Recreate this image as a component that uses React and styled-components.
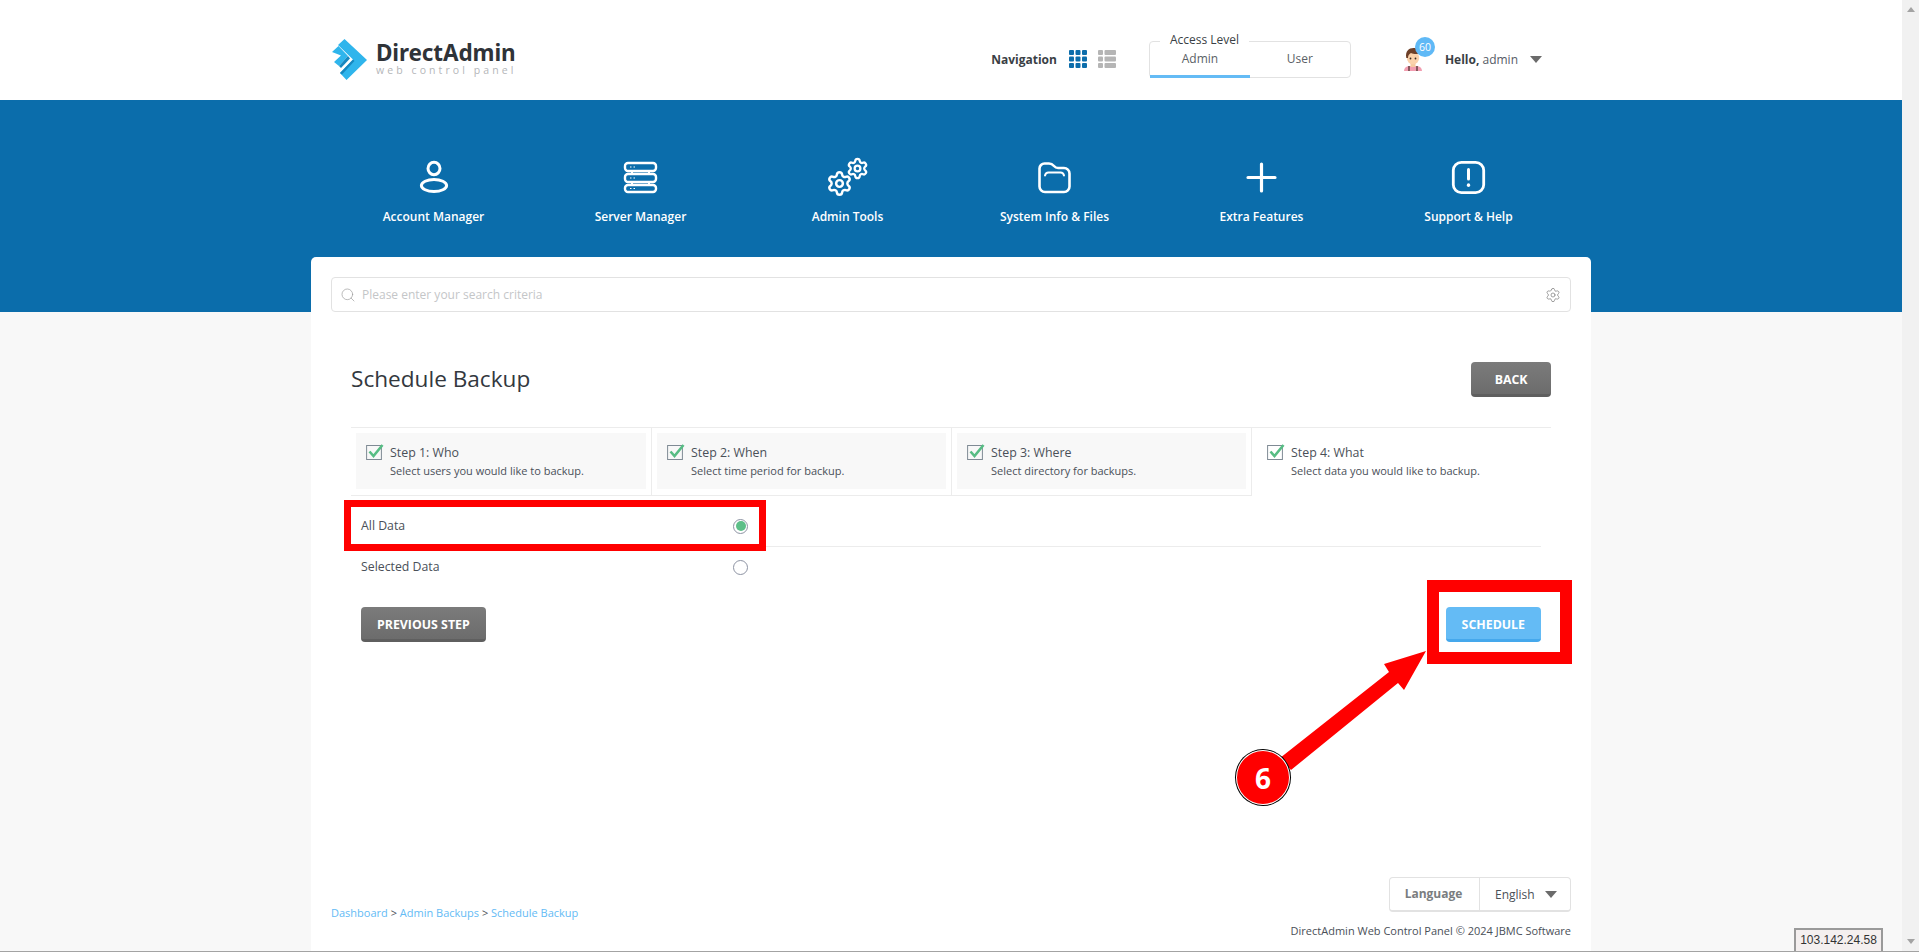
import React from "react";
import styled, { createGlobalStyle } from "styled-components";
import { Search, Settings } from "lucide-react";

const Global = createGlobalStyle`
  html, body { margin: 0; padding: 0; height: 100%; overflow: hidden; }
  body { background: #f8f8f8; font-family: "Open Sans", "Noto Sans", sans-serif; color: #3a3f45; }
  * { box-sizing: border-box; }
`;

const Viewport = styled.div`
  position: relative;
  display: flex;
  width: 1919px;
  height: 952px;
  border-bottom: 1px solid #a3a3a3;
  overflow: hidden;
`;
const Page = styled.div`
  flex: 1;
  min-width: 0;
  display: flex;
  flex-direction: column;
`;
const ScrollTrack = styled.div`
  width: 17px;
  background: #f1f1f1;
  display: flex;
  flex-direction: column;
  justify-content: space-between;
  align-items: center;
  padding: 7px 0 7px;
`;
const ScrollArrow = styled.div`
  width: 0;
  height: 0;
  border-left: 4px solid transparent;
  border-right: 4px solid transparent;
  ${(p) => (p.$down ? "border-top: 5px solid #a3a3a3;" : "border-bottom: 5px solid #a3a3a3;")}
`;

const Header = styled.header`
  height: 100px;
  background: #fff;
  flex: none;
`;
const HeaderInner = styled.div`
  width: 1242px;
  height: 100%;
  margin: 0 auto;
  padding: 18px 30px 0 2px;
  display: flex;
  align-items: center;
`;
const Logo = styled.div`
  display: flex;
  align-items: center;
  gap: 8px;
`;
const LogoWords = styled.div`
  display: flex;
  flex-direction: column;
`;
const LogoName = styled.div`
  font: 700 22.5px/25px "Noto Sans", sans-serif;
  color: #2f3338;
  letter-spacing: -0.1px;
  margin-top: -2px;
`;
const LogoSub = styled.div`
  font: 400 10.5px/12px "Open Sans", sans-serif;
  color: #b4b6b9;
  letter-spacing: 3.09px;
  white-space: nowrap;
  margin-top: -1px;
`;
const NavSwitch = styled.div`
  margin-left: auto;
  display: flex;
  align-items: center;
  gap: 12px;
`;
const NavLabel = styled.span`
  font-size: 12px;
  font-weight: 700;
  color: #3a3f45;
`;
const NavIcons = styled.div`
  display: flex;
  gap: 11px;
`;
const Access = styled.div`
  position: relative;
  margin-left: 33px;
  width: 202px;
  height: 37px;
  border: 1px solid #e2e2e2;
  border-radius: 4px;
  display: flex;
`;
const AccessLegend = styled.span`
  position: absolute;
  top: -10px;
  left: 10px;
  padding: 0 10px;
  background: #fff;
  font-size: 12px;
  line-height: 16px;
  color: #3a3f45;
`;
const AccessTab = styled.div`
  flex: 1;
  display: flex;
  align-items: center;
  justify-content: center;
  font-size: 12px;
  color: #5a5f66;
  margin-bottom: -1px;
  padding-top: 1px;
  border-bottom: 3px solid ${(p) => (p.$active ? "#64bbf5" : "transparent")};
`;
const UserMenu = styled.div`
  margin-left: 52px;
  display: flex;
  align-items: center;
`;
const AvatarWrap = styled.div`
  position: relative;
  width: 20px;
  height: 24px;
  margin-right: 22px;
`;
const Badge = styled.span`
  position: absolute;
  top: -10px;
  left: 12px;
  width: 20px;
  height: 20px;
  border-radius: 50%;
  background: #5fb9f6;
  color: #fff;
  font-size: 10.5px;
  line-height: 20px;
  text-align: center;
`;
const Hello = styled.span`
  font-size: 12px;
  color: #555b66;
  b { font-weight: 700; color: #3a3f45; }
`;
const Caret = styled.span`
  display: inline-block;
  width: 0;
  height: 0;
  border-left: 6px solid transparent;
  border-right: 6px solid transparent;
  border-top: 7px solid #6b6b6b;
  margin-left: ${(p) => p.$gap || 11}px;
`;

const Hero = styled.section`
  flex: none;
  height: 212px;
  background: #0b6dab;
`;
const HeroNav = styled.nav`
  width: 1242px;
  margin: 0 auto;
  padding-top: 57px;
  display: grid;
  grid-template-columns: repeat(6, 1fr);
`;
const HeroItem = styled.div`
  display: flex;
  flex-direction: column;
  align-items: center;
`;
const HeroIcon = styled.div`
  height: 40px;
  display: flex;
  align-items: center;
  justify-content: center;
  margin-bottom: 10px;
`;
const HeroLabel = styled.span`
  font-size: 12px;
  line-height: 20px;
  font-weight: 600;
  color: #fff;
`;

const Card = styled.main`
  position: relative;
  width: 1280px;
  margin: -55px auto 0;
  flex: 1;
  background: #fff;
  border-radius: 5px 5px 0 0;
  padding: 20px 20px 12px;
  display: flex;
  flex-direction: column;
`;
const SearchBar = styled.div`
  height: 35px;
  border: 1px solid #e2e2e2;
  border-radius: 4px;
  display: flex;
  align-items: center;
  padding: 0 9px 0 8px;
  gap: 6px;
  font-size: 12px;
  color: #c4c6c8;
`;
const SearchText = styled.span`
  flex: 1;
`;
const Content = styled.div`
  padding: 0 20px;
  margin-top: 50px;
`;
const TitleRow = styled.div`
  display: flex;
  justify-content: space-between;
  align-items: center;
  height: 35px;
`;
const Title = styled.h1`
  margin: -2px 0 0;
  font-size: 22.6px;
  font-weight: 500;
  color: #33383e;
`;
const Button = styled.button`
  height: 35px;
  padding: 2px ${(p) => p.$pad || 16}px 0;
  border: 0;
  border-bottom: 3px solid ${(p) => (p.$primary ? "#45a8ec" : "#5f5f5f")};
  border-radius: 4px;
  background: ${(p) => (p.$primary ? "#64bbf5" : "linear-gradient(#7b7b7b, #6c6c6c)")};
  color: #fff;
  font: 700 12.35px "Open Sans", sans-serif;
  text-transform: uppercase;
`;
const Steps = styled.div`
  margin-top: 30px;
  border-top: 1px solid #ececec;
  display: grid;
  grid-template-columns: 301px 300px 300px 299px;
`;
const StepCell = styled.div`
  height: 68px;
  padding: 5px 5px 6px;
  border-right: ${(p) => (p.$last ? "0" : "1px solid #ececec")};
  border-bottom: ${(p) => (p.$last ? "0" : "1px solid #ececec")};
`;
const StepInner = styled.div`
  height: 56px;
  padding: 11px 10px 0;
  background: ${(p) => (p.$active ? "transparent" : "#f8f8f8")};
`;
const StepHead = styled.div`
  display: flex;
  align-items: center;
  gap: 6px;
  height: 16px;
`;
const StepTitle = styled.span`
  font-size: 12.4px;
  font-weight: 500;
  color: #4a5058;
`;
const StepDesc = styled.div`
  margin: 3px 0 0 24px;
  font-size: 11px;
  line-height: 16px;
  color: #4a5058;
  white-space: nowrap;
`;
const Options = styled.div`
  width: 1190px;
  margin-top: 10px;
`;
const OptionRow = styled.div`
  height: ${(p) => (p.$last ? 40 : 41)}px;
  padding: 0 10px;
  display: grid;
  grid-template-columns: 372px 15px;
  align-items: center;
  font-size: 12.3px;
  font-weight: 500;
  color: #4a5058;
  border-bottom: ${(p) => (p.$last ? "0" : "1px solid #ececec")};
`;
const OptionLabel = styled.span`
  margin-top: -2px;
`;
const Radio = styled.span`
  width: 15px;
  height: 15px;
  border-radius: 50%;
  border: 1px solid #8d93a3;
  background: #fff;
  display: flex;
  align-items: center;
  justify-content: center;
  &::after {
    content: "";
    width: 10px;
    height: 10px;
    border-radius: 50%;
    background: ${(p) => (p.$on ? "#5dbf88" : "transparent")};
  }
`;
const Actions = styled.div`
  width: 1190px;
  margin-top: 20px;
  padding-left: 10px;
  display: flex;
  justify-content: space-between;
`;
const Footer = styled.footer`
  margin-top: auto;
  display: flex;
  justify-content: space-between;
  align-items: flex-end;
`;
const Crumbs = styled.div`
  font-size: 11px;
  line-height: 16px;
  color: #64bbf5;
  margin-bottom: 18px;
  span { color: #4a5058; }
`;
const FooterRight = styled.div`
  display: flex;
  flex-direction: column;
  align-items: flex-end;
  gap: 11px;
`;
const LangBox = styled.div`
  width: 182px;
  height: 35px;
  border: 1px solid #e2e2e2;
  border-bottom-width: 2px;
  border-radius: 4px;
  display: flex;
  font-size: 12px;
`;
const LangLabel = styled.div`
  width: 90px;
  padding: 0 2px 2px 0;
  border-right: 1px solid #e2e2e2;
  display: flex;
  align-items: center;
  justify-content: center;
  font-weight: 700;
  color: #7a7d80;
`;
const LangValue = styled.div`
  flex: 1;
  display: flex;
  align-items: center;
  padding-left: 15px;
  color: #4a5058;
`;
const Copy = styled.div`
  font-size: 11px;
  line-height: 16px;
  color: #4a5058;
  white-space: nowrap;
`;

const IpTip = styled.div`
  position: absolute;
  left: 1794px;
  bottom: 0;
  width: 89px;
  height: 23px;
  border: 2px solid #9a9a9a;
  border-bottom: 0;
  background: #f4efef;
  font: 400 12px/21px "Liberation Sans", Arial, sans-serif;
  color: #333;
  text-align: center;
`;
const RedFrame = styled.div`
  position: absolute;
  left: ${(p) => p.$x}px;
  top: ${(p) => p.$y}px;
  width: ${(p) => p.$w}px;
  height: ${(p) => p.$h}px;
  border: ${(p) => p.$b}px solid #ff0000;
  pointer-events: none;
`;
const ArrowArt = styled.svg`
  position: absolute;
  left: 1270px;
  top: 640px;
`;
const StepMarker = styled.div`
  position: absolute;
  left: 1236px;
  top: 750px;
  width: 54px;
  height: 55px;
  border-radius: 50%;
  background: #ff0000;
  border: 1px solid #fff;
  box-shadow: 0 0 0 1px #000;
  display: flex;
  align-items: center;
  justify-content: center;
  color: #fff;
  font: 700 28px "Open Sans", sans-serif;
`;

const PersonIcon = () => (
  <svg width="30" height="34" viewBox="0 0 30 34" fill="none" stroke="#fff" strokeWidth="3">
    <ellipse cx="15" cy="8.5" rx="6" ry="6.2" />
    <ellipse cx="15" cy="25.5" rx="12.6" ry="6" />
  </svg>
);
const ServerIcon = () => (
  <svg width="35" height="33" viewBox="0 0 35 33" fill="none" stroke="#fff" strokeWidth="2.4">
    <rect x="2" y="2" width="31" height="8" rx="3" />
    <rect x="2" y="13" width="31" height="8" rx="3" />
    <rect x="2" y="24" width="31" height="7" rx="3" />
    <path d="M9 10v3M26 10v3M9 21v3M26 21v3" strokeWidth="2" />
    <path d="M7 6h1.500M10.500 6H12M7 17h1.500M10.500 17H12M7 27.500h1.500M10.500 27.500H12" strokeWidth="1" />
  </svg>
);
const GearsIcon = () => (
  <svg width="42" height="40" viewBox="1 0 42 40" fill="none">
    <Settings x="0" y="13" width="27" height="27" color="#fff" strokeWidth="2.2" />
    <Settings x="20" y="0" width="23" height="23" color="#fff" strokeWidth="2.4" />
  </svg>
);
const FolderIcon = () => (
  <svg width="35" height="33" viewBox="0 0 35 33" fill="none" stroke="#fff" strokeWidth="2.6" strokeLinecap="round" strokeLinejoin="round">
    <path d="M2.500 7.500a5 5 0 0 1 5-5h4.500c2.500 0 3.700 1 5 2.500 1 1.200 2 2 4 2H27a5.500 5.500 0 0 1 5.500 5.500v13a5.500 5.500 0 0 1-5.500 5.500H8a5.500 5.500 0 0 1-5.500-5.500z" />
    <path d="M8 14.500c.4-2 1.500-3 3.500-3h12c2 0 3.100 1 3.500 3" strokeWidth="2" />
  </svg>
);
const PlusIcon = () => (
  <svg width="31" height="31" viewBox="0 0 31 31" fill="none" stroke="#fff" strokeWidth="3.2" strokeLinecap="round">
    <path d="M15.500 2v27M2 15.500h27" />
  </svg>
);
const AlertIcon = () => (
  <svg width="35" height="35" viewBox="0 0 35 35" fill="none" stroke="#fff" strokeWidth="2.800" strokeLinecap="round">
    <rect x="2.300" y="2.300" width="30.400" height="30.400" rx="8" />
    <path d="M17.500 9.500v9.500" strokeWidth="3" />
    <path d="M17.500 25v.2" strokeWidth="3.400" />
  </svg>
);

const LogoMark = () => (
  <svg width="36" height="41" viewBox="0 0 36 41">
    <polygon points="6,6 12.500,0 35,21 14.500,41 8,34 21,20.500" fill="#2fb5ec" />
    <polygon points="8,34 21,20.500 22.500,22 10,35.500" fill="#1788c0" />
    <polygon points="0,13 6.500,7 16,17 7,27 2,23 9,16.500" fill="#2fb5ec" />
    <polygon points="7,27 16,17 18,19.500 9,29" fill="#1788c0" />
  </svg>
);
const GridIcon = () => (
  <svg width="18" height="18" viewBox="0 0 18 18" fill="#0b6dab">
    {[0, 6.5, 13].map((x) =>
      [0, 6.5, 13].map((y) => <rect key={`${x}-${y}`} x={x} y={y} width="5" height="5" rx="1" />)
    )}
  </svg>
);
const ListIcon = () => (
  <svg width="18" height="18" viewBox="0 0 18 18" fill="#b5b5b5">
    {[0, 6.5, 13].map((y) => (
      <React.Fragment key={y}>
        <rect x="0" y={y} width="5" height="5" rx="1" />
        <rect x="6.500" y={y} width="11.500" height="5" rx="1" />
      </React.Fragment>
    ))}
  </svg>
);
const Avatar = () => (
  <svg width="20" height="24" viewBox="0 0 20 24">
    <path d="M1 24c0-3 2-4.500 5-5h8c3 .5 5 2 5 5z" fill="#f29db0" />
    <path d="M6 19v5M14 19v5" stroke="#5b3b3b" strokeWidth="1.400" />
    <rect x="7.500" y="15" width="5" height="5" fill="#f6c9a0" />
    <ellipse cx="10" cy="11" rx="6.200" ry="6.500" fill="#fbd2ab" />
    <path d="M3.300 11C2 4 6 1 10.500 1c3 0 5.800 2 6 5.500-2 .8-6 .8-8.500-.5-1.500 1-3 2-3 5z" fill="#6d3f28" />
    <circle cx="7.500" cy="11.500" r=".9" fill="#3b2a20" />
    <circle cx="12.500" cy="11.500" r=".9" fill="#3b2a20" />
  </svg>
);
const CheckIcon = () => (
  <svg width="18" height="16" viewBox="0 0 18 16" fill="none">
    <rect x=".6" y="1.500" width="14.800" height="14" stroke="#7f8a94" />
    <path d="M3.500 7.500l4 4.500L16.500 1" stroke="#57bd84" strokeWidth="2.600" />
  </svg>
);

const heroItems = [
  ["Account Manager", PersonIcon],
  ["Server Manager", ServerIcon],
  ["Admin Tools", GearsIcon],
  ["System Info & Files", FolderIcon],
  ["Extra Features", PlusIcon],
  ["Support & Help", AlertIcon],
];
const steps = [
  ["Step 1: Who", "Select users you would like to backup."],
  ["Step 2: When", "Select time period for backup."],
  ["Step 3: Where", "Select directory for backups."],
  ["Step 4: What", "Select data you would like to backup."],
];

export default function App() {
  return (
    <Viewport>
      <Global />
      <Page>
        <Header>
          <HeaderInner>
            <Logo>
              <LogoMark />
              <LogoWords>
                <LogoName>DirectAdmin</LogoName>
                <LogoSub>web control panel</LogoSub>
              </LogoWords>
            </Logo>
            <NavSwitch>
              <NavLabel>Navigation</NavLabel>
              <NavIcons>
                <GridIcon />
                <ListIcon />
              </NavIcons>
            </NavSwitch>
            <Access>
              <AccessLegend>Access Level</AccessLegend>
              <AccessTab $active>Admin</AccessTab>
              <AccessTab>User</AccessTab>
            </Access>
            <UserMenu>
              <AvatarWrap>
                <Avatar />
                <Badge>60</Badge>
              </AvatarWrap>
              <Hello>
                <b>Hello,</b> admin
              </Hello>
              <Caret $gap={12} />
            </UserMenu>
          </HeaderInner>
        </Header>
        <Hero>
          <HeroNav>
            {heroItems.map(([label, Icon]) => (
              <HeroItem key={label}>
                <HeroIcon>
                  <Icon />
                </HeroIcon>
                <HeroLabel>{label}</HeroLabel>
              </HeroItem>
            ))}
          </HeroNav>
        </Hero>
        <Card>
          <SearchBar>
            <Search size={16} strokeWidth={1} color="#999" />
            <SearchText>Please enter your search criteria</SearchText>
            <Settings size={16} strokeWidth={1.2} color="#888" />
          </SearchBar>
          <Content>
            <TitleRow>
              <Title>Schedule Backup</Title>
              <Button $pad={23.5}>Back</Button>
            </TitleRow>
            <Steps>
              {steps.map(([title, desc], i) => (
                <StepCell key={title} $last={i === 3}>
                  <StepInner $active={i === 3}>
                    <StepHead>
                      <CheckIcon />
                      <StepTitle>{title}</StepTitle>
                    </StepHead>
                    <StepDesc>{desc}</StepDesc>
                  </StepInner>
                </StepCell>
              ))}
            </Steps>
            <Options>
              <OptionRow>
                <OptionLabel>All Data</OptionLabel>
                <Radio $on />
              </OptionRow>
              <OptionRow $last>
                <OptionLabel>Selected Data</OptionLabel>
                <Radio />
              </OptionRow>
            </Options>
            <Actions>
              <Button>Previous Step</Button>
              <Button $primary>Schedule</Button>
            </Actions>
          </Content>
          <Footer>
            <Crumbs>
              Dashboard <span>&gt;</span> Admin Backups <span>&gt;</span> Schedule Backup
            </Crumbs>
            <FooterRight>
              <LangBox>
                <LangLabel>Language</LangLabel>
                <LangValue>
                  English
                  <Caret $gap={10} />
                </LangValue>
              </LangBox>
              <Copy>DirectAdmin Web Control Panel © 2024 JBMC Software</Copy>
            </FooterRight>
          </Footer>
        </Card>
      </Page>
      <ScrollTrack>
        <ScrollArrow />
        <ScrollArrow $down />
      </ScrollTrack>
      <IpTip>103.142.24.58</IpTip>
      <RedFrame $x={344} $y={500} $w={422} $h={51} $b={7} />
      <RedFrame $x={1427} $y={580} $w={145} $h={84} $b={12} />
      <ArrowArt width="165" height="135" viewBox="1270 640 165 135">
        <polygon points="1426,651 1384,664 1389,672 1280,758 1291,770 1398,683 1404,690" fill="#ff0000" />
      </ArrowArt>
      <StepMarker>6</StepMarker>
    </Viewport>
  );
}
